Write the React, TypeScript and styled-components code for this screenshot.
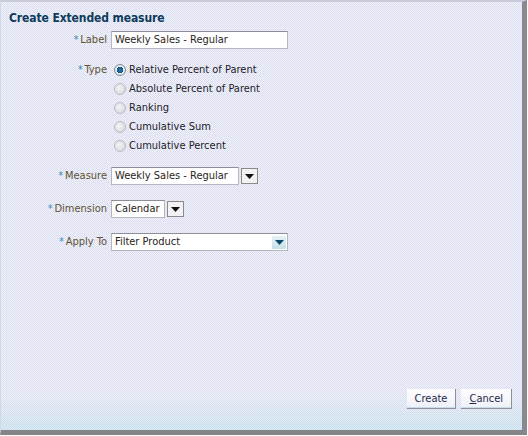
import styled, { createGlobalStyle } from "styled-components";

const Global = createGlobalStyle`
  html, body { margin: 0; padding: 0; background: #fff; }
  body { font-family: "DejaVu Sans", "Liberation Sans", sans-serif; }
`;

const Dialog = styled.div`
  box-sizing: border-box;
  width: 527px;
  height: 435px;
  position: relative;
  display: flex;
  flex-direction: column;
  border-top: 2px solid #c9cbdc;
  border-left: 1px solid #d4d6e4;
  border-right: 5px solid #8a8a8e;
  border-bottom: 5px solid #858588;
  background:
    linear-gradient(to bottom, rgba(255,255,255,0) 92%, rgba(190,225,235,0.55) 100%),
    repeating-conic-gradient(#d9dcee 0 25%, #f3f3fb 0 50%) 0 0 / 2px 2px;
`;

const Title = styled.h2`
  margin: 0;
  padding: 9px 0 0 8px;
  height: 17px;
  font-family: "DejaVu Sans Condensed", "DejaVu Sans", sans-serif;
  font-size: 12px;
  font-weight: bold;
  color: #0d3b5c;
  letter-spacing: -0.1px;
`;

const Form = styled.div`
  display: grid;
  grid-template-columns: 106px 1fr;
  column-gap: 4px;
  align-items: center;
  margin-top: 3px;
  font-family: "DejaVu Sans Condensed", "DejaVu Sans", sans-serif;
  font-size: 11px;
`;

const Label = styled.div<{ $top?: boolean; $gap: number }>`
  text-align: right;
  color: #5e5236;
  align-self: ${({ $top }) => ($top ? "start" : "center")};
  margin-top: ${({ $gap }) => $gap}px;
  line-height: 18px;
`;

const Star = styled.span`
  color: #2e86b8;
  font-size: 10px;
  margin-right: 2px;
`;

const Cell = styled.div<{ $gap: number }>`
  margin-top: ${({ $gap }) => $gap}px;
  display: flex;
  align-items: center;
`;

const TextBox = styled.div<{ $w: number }>`
  box-sizing: border-box;
  width: ${({ $w }) => $w}px;
  height: 18px;
  background: #fff;
  border: 1px solid #b4b6c0;
  border-top-color: #8c8e98;
  padding: 0 3px;
  line-height: 16px;
  color: #2a2418;
  white-space: nowrap;
  overflow: hidden;
`;

const SelectBox = styled(TextBox)`
  display: flex;
  justify-content: space-between;
  align-items: center;
  padding-right: 1px;
`;

const DropBtn = styled.div`
  box-sizing: border-box;
  width: 17px;
  height: 16px;
  margin-left: 2px;
  border: 1px solid #8a8a8a;
  background: #f2f2f2;
  display: flex;
  align-items: center;
  justify-content: center;
`;

const InlineArrow = styled.div`
  width: 14px;
  height: 13px;
  background: linear-gradient(#e6f2f6, #c8e0ea);
  display: flex;
  align-items: center;
  justify-content: center;
`;

const Radios = styled.div`
  display: flex;
  flex-direction: column;
  margin-top: -1px;
`;

const RadioRow = styled.label`
  display: flex;
  align-items: center;
  height: 19px;
  color: #1c1c28;
`;

const Radio = styled.span<{ $on?: boolean }>`
  box-sizing: border-box;
  width: 12px;
  height: 12px;
  border-radius: 50%;
  margin: 0 3px 0 3px;
  border: 1px solid ${({ $on }) => ($on ? "#7c8a96" : "#b8bac2")};
  background: ${({ $on }) =>
    $on
      ? "radial-gradient(circle at 50% 50%, #1e6aa0 0 2.5px, #0c3c60 3px, #e8eaf0 3.5px)"
      : "radial-gradient(circle at 40% 40%, #f4f4f6, #d2d3d8)"};
`;

const Footer = styled.div`
  margin-top: auto;
  display: flex;
  justify-content: flex-end;
  gap: 5px;
  padding: 0 10px 21px 0;
`;

const Button = styled.button`
  box-sizing: border-box;
  height: 20px;
  padding: 0 8px;
  font-family: "DejaVu Sans Condensed", "DejaVu Sans", sans-serif;
  font-size: 11px;
  color: #1e2a4a;
  background: linear-gradient(#fdfdff, #eef0f6);
  border: none;
  border-right: 1px solid #8e9098;
  border-bottom: 1px solid #8e9098;
  box-shadow: inset 0 -1px 0 #c6dce6;
  u { text-decoration: underline; }
`;

const Arrow = ({ color }: { color: string }) => (
  <svg width="9" height="5" viewBox="0 0 9 5">
    <path d="M0 0h9L4.5 5z" fill={color} />
  </svg>
);

const types = [
  "Relative Percent of Parent",
  "Absolute Percent of Parent",
  "Ranking",
  "Cumulative Sum",
  "Cumulative Percent",
];

export default function App() {
  return (
    <>
      <Global />
      <Dialog>
        <Title>Create Extended measure</Title>
        <Form>
          <Label $gap={0}>
            <Star>*</Star>Label
          </Label>
          <Cell $gap={0}>
            <TextBox $w={177}>Weekly Sales - Regular</TextBox>
          </Cell>

          <Label $gap={12} $top>
            <Star>*</Star>Type
          </Label>
          <Cell $gap={12}>
            <Radios>
              {types.map((t, i) => (
                <RadioRow key={t}>
                  <Radio $on={i === 0} />
                  {t}
                </RadioRow>
              ))}
            </Radios>
          </Cell>

          <Label $gap={12}>
            <Star>*</Star>Measure
          </Label>
          <Cell $gap={12}>
            <TextBox $w={128}>Weekly Sales - Regular</TextBox>
            <DropBtn>
              <Arrow color="#111" />
            </DropBtn>
          </Cell>

          <Label $gap={15}>
            <Star>*</Star>Dimension
          </Label>
          <Cell $gap={15}>
            <TextBox $w={54}>Calendar</TextBox>
            <DropBtn>
              <Arrow color="#111" />
            </DropBtn>
          </Cell>

          <Label $gap={15}>
            <Star>*</Star>Apply To
          </Label>
          <Cell $gap={15}>
            <SelectBox $w={177}>
              Filter Product
              <InlineArrow>
                <Arrow color="#0c4a6a" />
              </InlineArrow>
            </SelectBox>
          </Cell>
        </Form>
        <Footer>
          <Button>Create</Button>
          <Button>
            <u>C</u>ancel
          </Button>
        </Footer>
      </Dialog>
    </>
  );
}
